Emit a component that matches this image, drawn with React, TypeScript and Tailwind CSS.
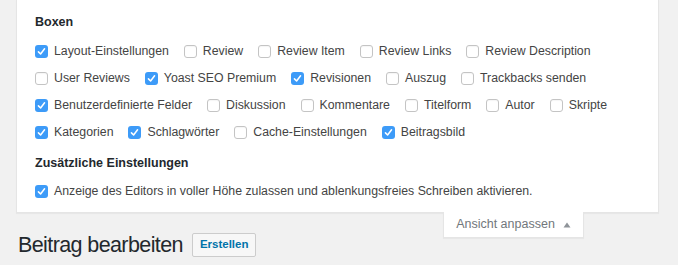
import React from 'react'

type Box = { label: string; checked: boolean }

const rows: Box[][] = [
    [
        { label: 'Layout-Einstellungen', checked: true },
        { label: 'Review', checked: false },
        { label: 'Review Item', checked: false },
        { label: 'Review Links', checked: false },
        { label: 'Review Description', checked: false },
    ],
    [
        { label: 'User Reviews', checked: false },
        { label: 'Yoast SEO Premium', checked: true },
        { label: 'Revisionen', checked: true },
        { label: 'Auszug', checked: false },
        { label: 'Trackbacks senden', checked: false },
    ],
    [
        { label: 'Benutzerdefinierte Felder', checked: true },
        { label: 'Diskussion', checked: false },
        { label: 'Kommentare', checked: false },
        { label: 'Titelform', checked: false },
        { label: 'Autor', checked: false },
        { label: 'Skripte', checked: false },
    ],
    [
        { label: 'Kategorien', checked: true },
        { label: 'Schlagwörter', checked: true },
        { label: 'Cache-Einstellungen', checked: false },
        { label: 'Beitragsbild', checked: true },
    ],
]

const CheckBox: React.FC<{ checked: boolean }> = ({ checked }) =>
    checked ? (
        <span className="flex h-[13px] w-[13px] shrink-0 items-center justify-center rounded-[3px] bg-[#3d9bf8]">
            <svg width="9" height="9" viewBox="0 0 10 10" fill="none">
                <path d="M1.6 5.4 L4 7.8 L8.4 2" stroke="#fff" strokeWidth="1.7" strokeLinecap="round" strokeLinejoin="round" />
            </svg>
        </span>
    ) : (
        <span className="block h-[13px] w-[13px] shrink-0 rounded-[3px] border border-[#c4c4c4] bg-white shadow-[inset_0_1px_1px_rgba(0,0,0,0.04)]" />
    )

const Option: React.FC<Box> = ({ label, checked }) => (
    <label className="mr-[15px] flex items-center gap-[6px] whitespace-nowrap">
        <CheckBox checked={checked} />
        <span>{label}</span>
    </label>
)

export default function App() {
    return (
        <div
            className="h-[265px] w-[678px] overflow-hidden bg-[#f1f1f1] text-[12.3px] text-[#444]"
            style={{ fontFamily: '"Liberation Sans", Arial, sans-serif' }}
        >
            <div className="relative ml-[16px] w-[643px] border-x border-b border-[#e5e5e5] bg-white pb-[7px] pl-[18px] shadow-[0_1px_1px_rgba(0,0,0,0.04)]">
                <h5 className="pt-[13px] text-[12.5px] leading-[18px] font-bold text-[#23282d]">Boxen</h5>
                <div className="mt-[7px]">
                    {rows.map((row, i) => (
                        <div key={i} className="flex h-[27px] items-center">
                            {row.map((b) => (
                                <Option key={b.label} {...b} />
                            ))}
                        </div>
                    ))}
                </div>
                <h5 className="mt-[8px] text-[12.5px] leading-[18px] font-bold text-[#23282d]">
                    Zusätzliche Einstellungen
                </h5>
                <div className="mt-[6px] flex h-[27px] items-center">
                    <Option label="Anzeige des Editors in voller Höhe zulassen und ablenkungsfreies Schreiben aktivieren." checked={true} />
                </div>

                <button className="absolute top-full left-[426px] flex h-[26px] w-[141px] items-center justify-center gap-[8px] border-x border-b border-[#e5e5e5] bg-white text-[12.5px] text-[#72777c] shadow-[0_1px_1px_rgba(0,0,0,0.04)]">
                    <span>Ansicht anpassen</span>
                    <svg width="8" height="6" viewBox="0 0 8 6">
                        <path d="M4 0.5 L7.5 5.5 L0.5 5.5 Z" fill="#8f9499" />
                    </svg>
                </button>
            </div>

            <div className="mt-[20px] flex items-center pl-[18px]">
                <h1 className="text-[21.5px] leading-[24px] font-normal tracking-[-0.6px] text-[#23282d]">Beitrag bearbeiten</h1>
                <a className="ml-[9px] flex h-[24px] items-center rounded-[2px] border border-[#cccccc] bg-[#f7f7f7] px-[7px] text-[11.5px] font-semibold text-[#0073aa]">
                    Erstellen
                </a>
            </div>
        </div>
    )
}
